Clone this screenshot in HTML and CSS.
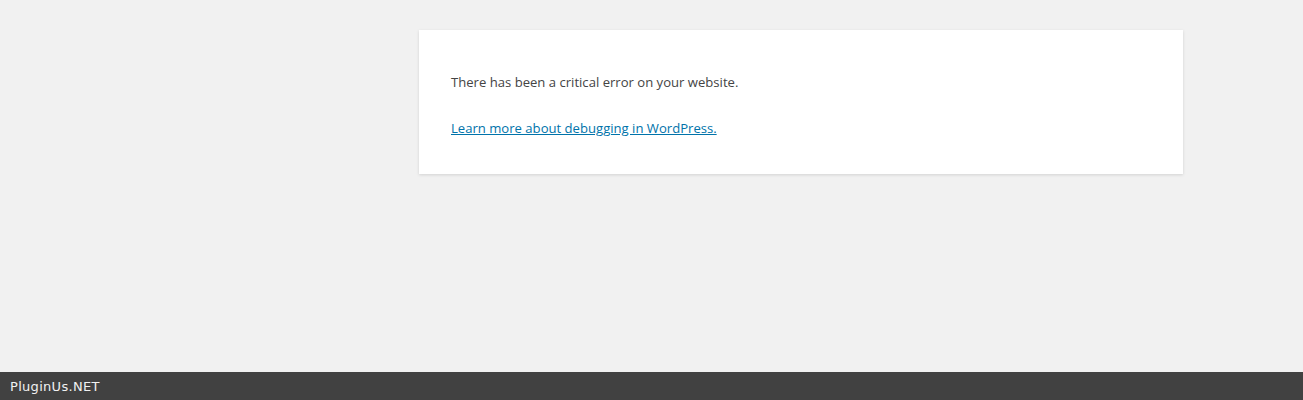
FILE: index.html
```html
<!DOCTYPE html>
<html lang="en">
<head>
    <meta charset="UTF-8">
    <meta name="viewport" content="width=device-width, initial-scale=1.0">
    <title>WordPress &rsaquo; Error</title>
    <link rel="stylesheet" href="styles.css">
</head>
<body>
    <div class="page">
        <div class="error-page">
            <p>There has been a critical error on your website.</p>
            <p><a href="#">Learn more about debugging in WordPress.</a></p>
        </div>
    </div>

    <!-- bottom bar -->
    <div class="footer">PluginUs.NET</div>
</body>
</html>
```

FILE: styles.css
```css
* {
    box-sizing: border-box;
}

body {
    margin: 0;
    min-height: 400px;
    display: flex;
    flex-direction: column;
    background-color: #f1f1f1;
    font-family: "Open Sans", "Noto Sans", sans-serif;
    color: #444;
}

.page {
    flex: 1;
    padding: 30px 0 0 419px;
}

.error-page {
    width: 764px;
    padding: 16px 32px 15px;
    background-color: #fff;
    box-shadow: 0 1px 3px rgba(0, 0, 0, 0.13);
}

.error-page p {
    font-size: 13.1px;
    line-height: 21px;
    margin: 26px 0 20px;
}

.error-page p + p {
    margin-top: 25px;
}

.error-page a {
    color: #0073aa;
}

.footer {
    height: 28px;
    padding: 0 10px;
    display: flex;
    align-items: center;
    background-color: #414141;
    color: #f1f1f1;
    font-family: "DejaVu Sans", "Liberation Sans", sans-serif;
    font-size: 13px;
    letter-spacing: 0.3px;
}
```
